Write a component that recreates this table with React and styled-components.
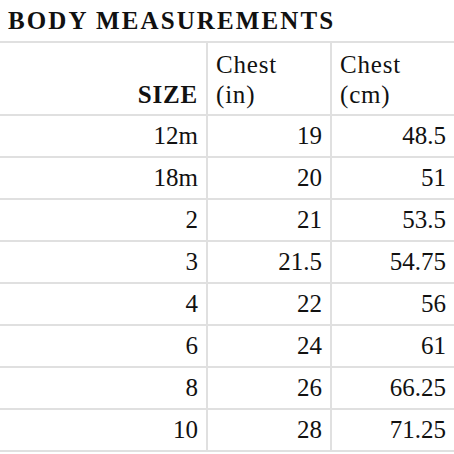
import React from "react";
import styled, { createGlobalStyle } from "styled-components";

const GlobalStyle = createGlobalStyle`
  body {
    margin: 0;
    background: #fff;
    color: #111;
    font-family: "Liberation Serif", "Times New Roman", serif;
  }
`;

const Title = styled.h2`
  margin: 0;
  padding: 0 8px;
  height: 41px;
  line-height: 42px;
  font-size: 25px;
  font-weight: bold;
  letter-spacing: 2.1px;
`;

const Table = styled.table`
  width: 454px;
  border-collapse: collapse;
  table-layout: fixed;
  font-size: 25px;
`;

const HeadCell = styled.th`
  border: 2px solid #e0e0e0;
  border-left: ${(p) => (p.first ? "none" : "2px solid #e0e0e0")};
  border-right: ${(p) => (p.last ? "none" : "2px solid #e0e0e0")};
  height: 67px;
  padding: 0 8px 4px;
  vertical-align: bottom;
  text-align: ${(p) => (p.first ? "right" : "left")};
  font-weight: ${(p) => (p.first ? "bold" : "normal")};
  line-height: 30px;
  letter-spacing: 0.8px;
`;

const Cell = styled.td`
  border: 2px solid #e0e0e0;
  border-left: ${(p) => (p.first ? "none" : "2px solid #e0e0e0")};
  border-right: ${(p) => (p.last ? "none" : "2px solid #e0e0e0")};
  height: 40px;
  padding: 0 8px 0 0;
  text-align: right;
  vertical-align: middle;
  line-height: 40px;
`;

const rows = [
  ["12m", "19", "48.5"],
  ["18m", "20", "51"],
  ["2", "21", "53.5"],
  ["3", "21.5", "54.75"],
  ["4", "22", "56"],
  ["6", "24", "61"],
  ["8", "26", "66.25"],
  ["10", "28", "71.25"],
];

export default function App() {
  return (
    <>
      <GlobalStyle />
      <Title>BODY MEASUREMENTS</Title>
      <Table>
        <colgroup>
          <col style={{ width: 207 }} />
          <col style={{ width: 124 }} />
          <col style={{ width: 123 }} />
        </colgroup>
        <thead>
          <tr>
            <HeadCell first>SIZE</HeadCell>
            <HeadCell>
              Chest
              <br />
              (in)
            </HeadCell>
            <HeadCell last>
              Chest
              <br />
              (cm)
            </HeadCell>
          </tr>
        </thead>
        <tbody>
          {rows.map((r) => (
            <tr key={r[0]}>
              <Cell first>{r[0]}</Cell>
              <Cell>{r[1]}</Cell>
              <Cell last>{r[2]}</Cell>
            </tr>
          ))}
        </tbody>
      </Table>
    </>
  );
}
